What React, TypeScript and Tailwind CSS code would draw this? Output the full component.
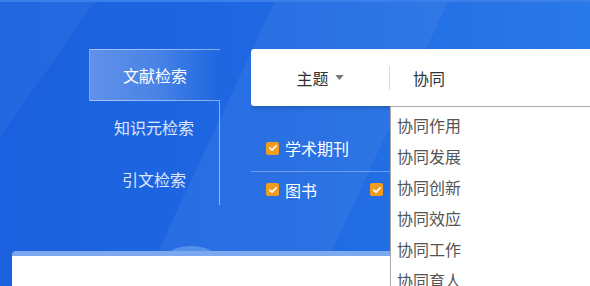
import React from "react"

const suggestions = ["协同作用", "协同发展", "协同创新", "协同效应", "协同工作", "协同育人"]

function Check() {
  return (
    <span className="flex h-[13px] w-[13px] items-center justify-center rounded-[2px] bg-[#f19c1d]">
      <svg viewBox="0 0 12 12" className="h-[10px] w-[10px]">
        <path d="M2.2 6.2 L4.8 8.6 L9.8 3.4" fill="none" stroke="#fff" strokeWidth="2" strokeLinecap="round" strokeLinejoin="round" />
      </svg>
    </span>
  )
}

function CheckItem({ label }: { label: string }) {
  return (
    <label className="flex w-[104px] shrink-0 items-center gap-[6px] text-[16px] text-white">
      <Check />
      <span>{label}</span>
    </label>
  )
}

export default function App() {
  return (
    <div
      className="relative h-[286px] w-[590px] overflow-hidden border-t-2 border-[#3b80ea] bg-gradient-to-r from-[#1b60de] via-[#1f69e2] to-[#2a79e8]"
      style={{ fontFamily: '"Noto Sans CJK SC", "Noto Sans", sans-serif' }}
    >
      {/* diagonal light streaks */}
      <div className="pointer-events-none absolute inset-0 bg-[linear-gradient(115deg,transparent_0%,transparent_38%,rgba(255,255,255,0.05)_38%,rgba(255,255,255,0.05)_62%,transparent_62%)]" />
      <div className="pointer-events-none absolute inset-0 bg-[linear-gradient(125deg,rgba(255,255,255,0.04)_0%,rgba(255,255,255,0.04)_12%,transparent_12%)]" />

      <div className="relative flex pl-[89px] pt-[47px]">
        {/* left tabs */}
        <div className="flex w-[131px] flex-col">
          <div className="flex h-[52px] items-center justify-center border border-r-0 border-white/45 bg-gradient-to-r from-white/30 via-white/20 to-white/0 text-[16px] text-white">
            文献检索
          </div>
          <div className="flex flex-col border-r border-white/50">
            <div className="flex h-[52px] items-center justify-center text-[16px] text-white/85">知识元检索</div>
            <div className="flex h-[52px] items-center justify-center text-[16px] text-white/85">引文检索</div>
          </div>
        </div>

        {/* search area */}
        <div className="ml-[31px] flex-1 overflow-hidden">
          <div className="flex h-[57px] items-center rounded-l-[3px] bg-white shadow-[0_2px_4px_rgba(0,0,0,0.2)]">
            <div className="flex w-[138px] items-center justify-center gap-[6px] text-[16px] text-[#333]">
              <span>主题</span>
              <svg viewBox="0 0 10 6" className="h-[5px] w-[9px]">
                <path d="M0 0 L10 0 L5 6 Z" fill="#777" />
              </svg>
            </div>
            <div className="h-[24px] w-px bg-[#dcdcdc]" />
            <span className="pl-[23px] text-[16px] text-[#333]">协同</span>
          </div>

          <div className="pt-[27px]">
            <div className="flex h-[30px] items-center pl-[15px]">
              <CheckItem label="学术期刊" />
            </div>
            <div className="mt-[8px] h-px w-full bg-white/30" />
            <div className="flex h-[30px] items-center pl-[15px] pt-[5px]">
              <CheckItem label="图书" />
              <CheckItem label="学位论文" />
            </div>
          </div>
        </div>
      </div>

      {/* bottom card */}
      <div className="relative ml-[12px] mt-[46px]">
        <div className="absolute left-[154px] top-[-5px] h-[12px] w-[50px] rounded-[50%_50%_0_0/100%_100%_0_0] bg-[#5590ea]" />
        <div className="relative rounded-tl-[4px] border-t-[5px] border-[#7ba8ee] bg-white pl-[218px] pt-[29px] text-[16px] text-[#2c6bde]">
          热门推荐
        </div>
      </div>

      {/* suggestion dropdown */}
      <div className="absolute left-[390px] top-[104px] z-10 w-[210px] border-l border-t border-[#a8a8a8] bg-white pt-[3px]">
        {suggestions.map((s) => (
          <div key={s} className="h-[31px] pl-[6px] text-[16px] leading-[31px] text-[#555]">
            {s}
          </div>
        ))}
      </div>
    </div>
  )
}
